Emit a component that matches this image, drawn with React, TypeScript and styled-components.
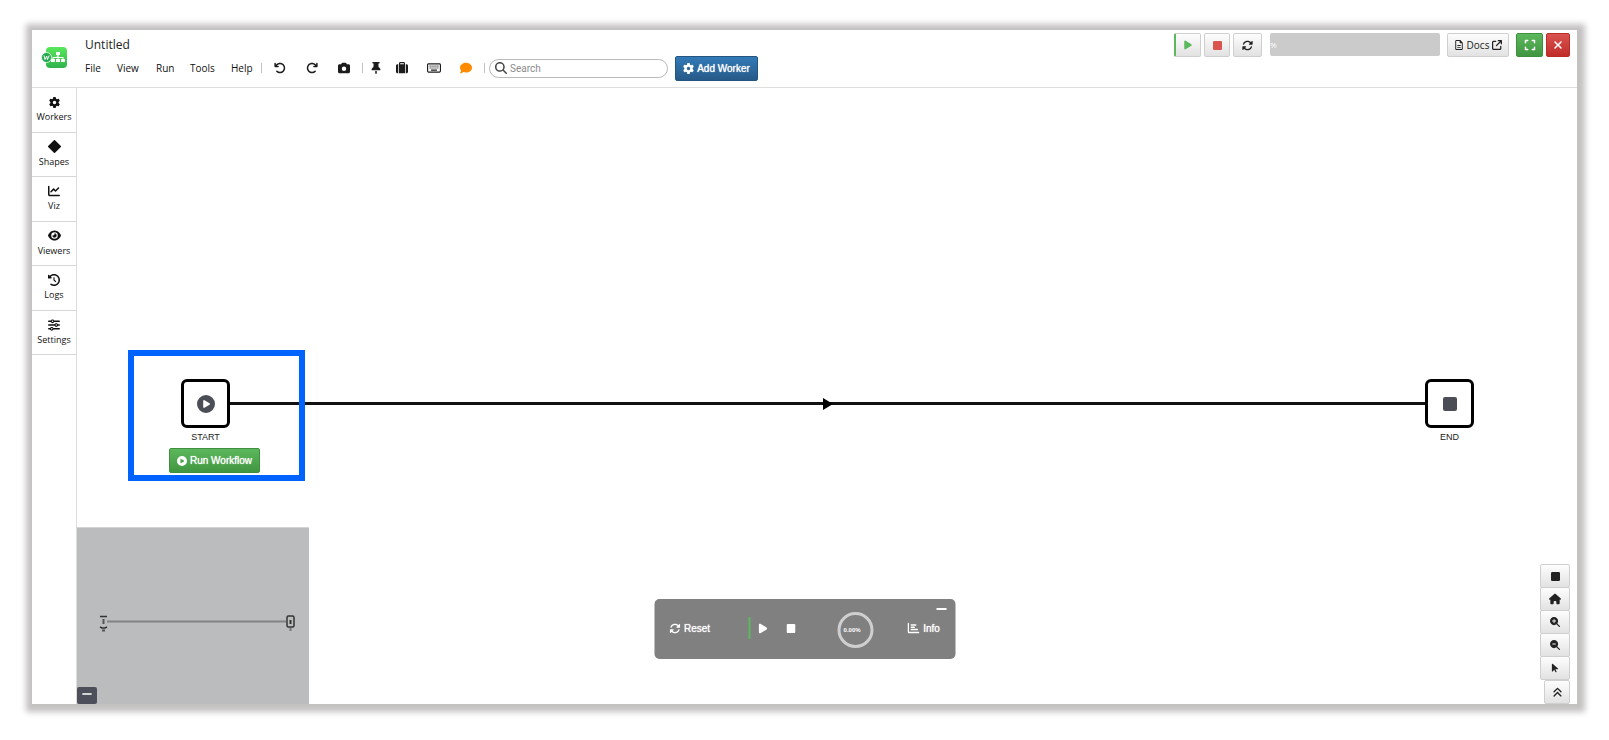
import React from 'react';
import styled, { createGlobalStyle, css } from 'styled-components';
import {
  FaArrowRotateLeft, FaArrowRotateRight, FaCamera, FaThumbtack, FaSuitcase, FaRegKeyboard, FaComment,
  FaMagnifyingGlass, FaGear, FaPlay, FaRotate, FaRegFileLines, FaArrowUpRightFromSquare,
  FaExpand, FaXmark, FaChartLine, FaEye, FaClockRotateLeft, FaSliders, FaCirclePlay, FaHouse,
  FaMagnifyingGlassPlus, FaMagnifyingGlassMinus, FaArrowPointer, FaAnglesUp, FaChartBar, FaMinus,
} from 'react-icons/fa6';

const GlobalStyle = createGlobalStyle`
  *, *::before, *::after { box-sizing: border-box; }
  body { margin: 0; background: #fff; color: #222; font-family: 'Open Sans', 'Noto Sans', sans-serif; font-size: 10px; }
  button, input { font: inherit; color: inherit; }
  button { cursor: pointer; }
  svg { display: block; flex: none; }
`;

const Page = styled.div`
  min-height: 100vh;
  display: flex;
  padding: 30px 32px 36px;
`;

const Frame = styled.div`
  position: relative;
  flex: 1;
  display: flex;
  flex-direction: column;
  background: #fff;
  box-shadow: 1px 1px 6px 7px #c4c1c1;
`;

const Header = styled.header`
  display: flex;
  align-items: flex-start;
  height: 58px;
  padding-right: 7px;
  border-bottom: 1px solid #dedede;
`;

const Logo = styled.svg`
  margin: 16px 17px 0 9px;
`;

const HeaderMain = styled.div`
  flex: 1;
`;

const Title = styled.h1`
  margin: 0;
  padding-top: 7px;
  font-size: 12px;
  font-weight: 500;
  line-height: 16px;
`;

const MenuBar = styled.nav`
  display: flex;
  align-items: center;
  margin-top: 2px;
  height: 26px;
`;

const MenuButton = styled.button<{ $width: number }>`
  width: ${(p) => p.$width}px;
  padding: 0;
  border: 0;
  background: none;
  text-align: left;
  line-height: 16px;
  color: #111;
`;

const Divider = styled.span`
  width: 1px;
  height: 10px;
  background: #c8c0c0;
`;

const IconGroup = styled.div<{ $gap?: number; $start: number; $end: number }>`
  display: flex;
  align-items: center;
  gap: ${(p) => p.$gap ?? 0}px;
  padding: 0 ${(p) => p.$end}px 0 ${(p) => p.$start}px;
`;

const IconButton = styled.button<{ $color?: string }>`
  padding: 0;
  border: 0;
  background: none;
  color: ${(p) => p.$color ?? '#1c1c1c'};
`;

const SearchBox = styled.label`
  display: flex;
  align-items: center;
  gap: 3px;
  width: 179px;
  height: 19px;
  margin: 0 7px 0 4px;
  padding: 0 5px;
  border: 1px solid #b9b9b9;
  border-radius: 10px;
  color: #444;
  input {
    flex: 1;
    min-width: 0;
    padding: 0;
    border: 0;
    outline: 0;
    background: none;
    font-family: Roboto, sans-serif;
    font-size: 10px;
  }
  input::placeholder { color: #8b8b8b; opacity: 1; }
`;

const tones = {
  light: css`background: linear-gradient(#fdfdfd, #e2e2e2); border-color: #cfcfcf; color: #222;`,
  blue: css`background: linear-gradient(#337ab7, #265a88); border-color: #245580; color: #fff;`,
  green: css`background: linear-gradient(#5cb85c, #419641); border-color: #3e8f3e; color: #fff;`,
  red: css`background: linear-gradient(#d9534f, #c12e2a); border-color: #b92c28; color: #fff;`,
};

const Button = styled.button<{ $tone?: keyof typeof tones; $width: number; $accent?: boolean; $arial?: boolean }>`
  display: flex;
  align-items: center;
  justify-content: center;
  gap: 3px;
  width: ${(p) => p.$width}px;
  height: ${(p) => (p.$arial ? 25 : 24)}px;
  padding: 0;
  border: 1px solid;
  border-radius: 2px;
  white-space: nowrap;
  ${(p) => tones[p.$tone ?? 'light']}
  ${(p) => p.$accent && css`border-left: 2px solid #5cb85c;`}
  ${(p) => p.$arial && css`
    font-family: 'Liberation Sans', Arial, sans-serif;
    text-shadow: 0 0 1px #fff;
  `}
`;

const RunControls = styled.div`
  display: flex;
  padding-top: 3px;
`;

const ButtonSet = styled.div<{ $before?: number }>`
  display: flex;
  gap: 3px;
  margin-left: ${(p) => p.$before ?? 0}px;
`;

const Progress = styled.div`
  width: 170px;
  height: 23px;
  margin: 0 7px 0 8px;
  overflow: hidden;
  border-radius: 2px;
  background: #cbcbcb;
  color: #fff;
  font-size: 8px;
  line-height: 24px;
`;

const Body = styled.div`
  flex: 1;
  display: flex;
`;

const Sidebar = styled.aside`
  width: 45px;
  border-right: 1px solid #dcdcdc;
`;

const SideList = styled.div`
  display: grid;
  grid-template-rows: repeat(6, 1fr);
  height: 267px;
`;

const SideItem = styled.button`
  display: flex;
  flex-direction: column;
  align-items: center;
  justify-content: center;
  gap: 3px;
  padding: 0;
  border: 0;
  border-bottom: 1px solid #d6d6d6;
  background: #fff;
  color: #111;
  font-size: 9px;
  line-height: 12px;
`;

const Canvas = styled.main`
  position: relative;
  flex: 1;
`;

const Flow = styled.div`
  display: flex;
  align-items: flex-start;
  padding: 291px 103px 0 104px;
`;

const Node = styled.div`
  position: relative;
  width: 49px;
`;

const NodeBox = styled.div`
  display: flex;
  align-items: center;
  justify-content: center;
  height: 49px;
  border: 3px solid #000;
  border-radius: 6px;
  color: #4b4e57;
`;

const NodeLabel = styled.div`
  margin-top: 3px;
  text-align: center;
  font: 9px/12px 'Liberation Sans', Arial, sans-serif;
`;

const RunSlot = styled.div`
  position: absolute;
  top: 69px;
  left: -12px;
`;

const Connector = styled.div`
  flex: 1;
  display: flex;
  align-items: center;
  justify-content: center;
  height: 49px;
  background: linear-gradient(#111, #111) center / 100% 3px no-repeat;
`;

const Highlight = styled.div`
  position: absolute;
  top: 262px;
  left: 51px;
  width: 177px;
  height: 131px;
  border: 6px solid #0062ff;
  pointer-events: none;
`;

const MiniMap = styled.div`
  position: absolute;
  left: 0;
  bottom: 0;
  width: 232px;
  height: 177px;
  border-top: 1px solid #d3d5d5;
  background: #bbbcbe;
`;

const MiniToggle = styled.button`
  position: absolute;
  left: 0;
  bottom: 0;
  display: flex;
  align-items: center;
  justify-content: center;
  width: 20px;
  height: 17px;
  padding: 0 0 3px;
  border: 0;
  border-radius: 2px;
  background: #4d505a;
  color: #fff;
`;

const ViewTools = styled.div`
  position: absolute;
  right: 7px;
  bottom: 0;
  display: flex;
  flex-direction: column;
  align-items: flex-end;
  ${Button} + ${Button}:not(:last-child) { margin-top: -1px; }
`;

const Player = styled.section`
  position: absolute;
  left: 50%;
  bottom: 45px;
  transform: translateX(-50%);
  display: flex;
  align-items: center;
  width: 301px;
  height: 60px;
  padding: 0 15px 2px;
  border-radius: 5px;
  background: #808080;
  color: #fff;
  font-family: 'Liberation Sans', Arial, sans-serif;
`;

const PlayerButton = styled.button<{ $accent?: boolean; $push?: number }>`
  display: flex;
  align-items: center;
  gap: 4px;
  height: 22px;
  margin-left: ${(p) => p.$push ?? 0}px;
  padding: 0;
  border: 0;
  background: none;
  color: #fff;
  text-shadow: 0 0 1px #fff;
  ${(p) => p.$accent && css`padding-left: 7px; border-left: 2px solid #5cb85c;`}
`;

const Gauge = styled.div`
  display: flex;
  align-items: center;
  justify-content: center;
  width: 36px;
  height: 36px;
  margin: 3px 0 0 42px;
  padding-right: 6px;
  border: 3px solid #cfcfcf;
  border-radius: 50%;
  font-size: 6px;
  font-weight: 700;
`;

const Collapse = styled.button`
  position: absolute;
  top: 9px;
  right: 9px;
  width: 10px;
  height: 2px;
  padding: 0;
  border: 0;
  background: #fff;
`;

const Diamond = () => (
  <svg width="13" height="13" viewBox="0 0 13 13" fill="currentColor" aria-hidden="true">
    <path d="M5.7.4 .4 5.7a1.1 1.1 0 0 0 0 1.6l5.3 5.3a1.1 1.1 0 0 0 1.6 0l5.3-5.3a1.1 1.1 0 0 0 0-1.6L7.3.4a1.1 1.1 0 0 0-1.6 0z" />
  </svg>
);

const SquareIcon = ({ size, color = 'currentColor' }: { size: number; color?: string }) => (
  <svg width={size} height={size} viewBox="0 0 14 14" aria-hidden="true">
    <rect width="14" height="14" rx="2" fill={color} />
  </svg>
);

const AppLogo = () => (
  <Logo width="27" height="23" viewBox="0 0 27 23" aria-label="Workflow">
    <defs>
      <linearGradient id="leaf" x1="0" y1="0" x2="0" y2="1">
        <stop offset="0" stopColor="#58e85a" />
        <stop offset="1" stopColor="#2fb24c" />
      </linearGradient>
    </defs>
    <rect x="5" y="1" width="21" height="21" rx="4" fill="url(#leaf)" />
    <g fill="#fff">
      <rect x="15" y="6" width="4" height="3" />
      <path d="M16.5 9h1v2h5v3h-1v-2h-4v2h-1v-2h-4v2h-1v-3h4z" />
      <rect x="10" y="13" width="4" height="3" />
      <rect x="15" y="13" width="4" height="3" />
      <rect x="20" y="13" width="4" height="3" />
    </g>
    <circle cx="5.5" cy="11.5" r="5" fill="#22a84d" stroke="#fff" strokeWidth=".8" />
    <path d="M3 9.5l1 4 1.7-3.5.8 3.5 1.7-4" fill="none" stroke="#fff" />
  </Logo>
);

const menus: [string, number][] = [['File', 32], ['View', 39], ['Run', 34], ['Tools', 41], ['Help', 30]];

const sideItems: [string, React.ReactNode][] = [
  ['Workers', <FaGear size={11} />],
  ['Shapes', <Diamond />],
  ['Viz', <FaChartLine size={12} />],
  ['Viewers', <FaEye size={13} />],
  ['Logs', <FaClockRotateLeft size={12} />],
  ['Settings', <FaSliders size={12} />],
];

const viewTools: [string, React.ReactNode][] = [
  ['Stop', <SquareIcon size={9} />],
  ['Home', <FaHouse size={12} />],
  ['Zoom in', <FaMagnifyingGlassPlus size={10} />],
  ['Zoom out', <FaMagnifyingGlassMinus size={10} />],
  ['Select', <FaArrowPointer size={10} />],
];

export default function App() {
  return (
    <Page>
      <GlobalStyle />
      <Frame>
        <Header>
          <AppLogo />
          <HeaderMain>
            <Title>Untitled</Title>
            <MenuBar>
              {menus.map(([name, width]) => <MenuButton key={name} $width={width}>{name}</MenuButton>)}
              <Divider />
              <IconGroup $gap={20} $start={12} $end={12}>
                <IconButton aria-label="Undo"><FaArrowRotateLeft size={12} /></IconButton>
                <IconButton aria-label="Redo"><FaArrowRotateRight size={12} /></IconButton>
                <IconButton aria-label="Snapshot"><FaCamera size={12} /></IconButton>
              </IconGroup>
              <Divider />
              <IconGroup $start={7} $end={14}>
                <IconButton aria-label="Pin"><FaThumbtack size={12} /></IconButton>
              </IconGroup>
              <IconGroup $gap={19} $start={0} $end={12}>
                <IconButton aria-label="Toolbox"><FaSuitcase size={12} /></IconButton>
                <IconButton aria-label="Shortcuts"><FaRegKeyboard size={14} /></IconButton>
                <IconButton aria-label="Comment" $color="#ff8a00"><FaComment size={12} /></IconButton>
              </IconGroup>
              <Divider />
              <SearchBox>
                <FaMagnifyingGlass size={12} />
                <input type="text" placeholder="Search" aria-label="Search" />
              </SearchBox>
              <Button $tone="blue" $width={83} $arial><FaGear size={11} />Add Worker</Button>
            </MenuBar>
          </HeaderMain>
          <RunControls>
            <ButtonSet>
              <Button $width={27} $accent aria-label="Run"><FaPlay size={10} color="#5cb85c" /></Button>
              <Button $width={26} aria-label="Stop"><SquareIcon size={9} color="#d9534f" /></Button>
              <Button $width={29} aria-label="Refresh"><FaRotate size={11} /></Button>
            </ButtonSet>
            <Progress>%</Progress>
            <Button $width={62}><FaRegFileLines size={10} />Docs<FaArrowUpRightFromSquare size={10} /></Button>
            <ButtonSet $before={7}>
              <Button $tone="green" $width={27} aria-label="Full screen"><FaExpand size={12} /></Button>
              <Button $tone="red" $width={24} aria-label="Close"><FaXmark size={12} /></Button>
            </ButtonSet>
          </RunControls>
        </Header>
        <Body>
          <Sidebar>
            <SideList>
              {sideItems.map(([name, icon]) => <SideItem key={name}>{icon}{name}</SideItem>)}
            </SideList>
          </Sidebar>
          <Canvas>
            <Flow>
              <Node>
                <NodeBox><FaCirclePlay size={18} /></NodeBox>
                <NodeLabel>START</NodeLabel>
                <RunSlot>
                  <Button $tone="green" $width={91} $arial><FaCirclePlay size={10} />Run Workflow</Button>
                </RunSlot>
              </Node>
              <Connector>
                <svg width="10" height="12" viewBox="0 0 10 12"><path d="M0 0l10 6-10 6z" /></svg>
              </Connector>
              <Node>
                <NodeBox><SquareIcon size={14} /></NodeBox>
                <NodeLabel>END</NodeLabel>
              </Node>
            </Flow>
            <Highlight />
            <MiniMap>
              <svg width="232" height="176" viewBox="0 0 232 176" fill="none" stroke="#333" aria-hidden="true">
                <path d="M30 93.5H209" stroke="#808284" strokeWidth="2" />
                <path d="M23 88.5h7M23 99l2 1h3l2-1" strokeWidth="1.5" />
                <path d="M26.5 91v5M25 102.5h3" stroke="#555" strokeWidth="2" />
                <rect x="210" y="88" width="7" height="11" rx="1.5" strokeWidth="1.5" />
                <path d="M213.5 92v4" strokeWidth="2" />
                <path d="M213.5 100v3" stroke="#777" strokeWidth="2" />
              </svg>
              <MiniToggle aria-label="Hide map"><FaMinus size={12} /></MiniToggle>
            </MiniMap>
            <ViewTools>
              {viewTools.map(([name, icon]) => <Button key={name} $width={30} aria-label={name}>{icon}</Button>)}
              <Button $width={26} aria-label="Collapse tools"><FaAnglesUp size={11} /></Button>
            </ViewTools>
          </Canvas>
        </Body>
        <Player>
          <PlayerButton><FaRotate size={11} />Reset</PlayerButton>
          <PlayerButton $accent $push={38} aria-label="Play"><FaPlay size={11} /></PlayerButton>
          <PlayerButton $push={18} aria-label="Stop"><SquareIcon size={9} /></PlayerButton>
          <Gauge>0.00%</Gauge>
          <PlayerButton $push={34}><FaChartBar size={12} />Info</PlayerButton>
          <Collapse aria-label="Minimise" />
        </Player>
      </Frame>
    </Page>
  );
}
